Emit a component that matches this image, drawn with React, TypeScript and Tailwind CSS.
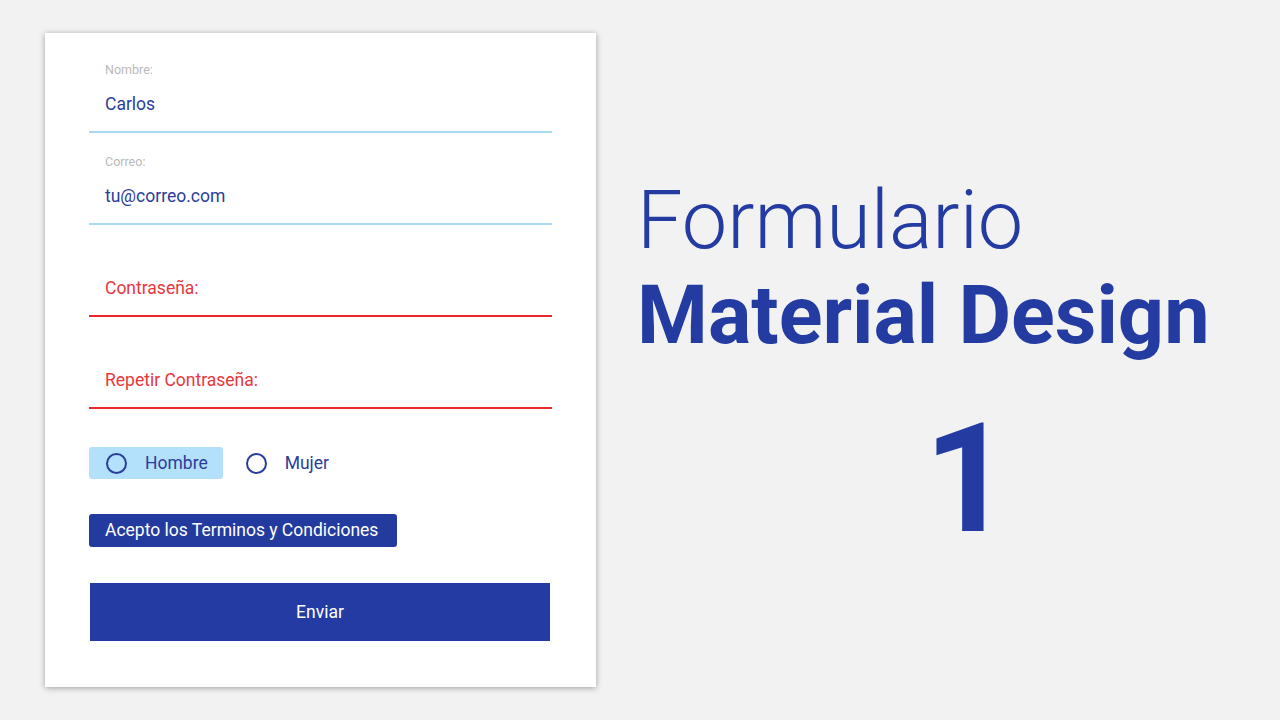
const font = { fontFamily: "Roboto, 'Liberation Sans', sans-serif" };

function Field({
  label,
  value,
  error = false,
}: {
  label?: string;
  value: string;
  error?: boolean;
}) {
  return (
    <div
      className={`pt-[21px] pb-[15px] border-b-2 ${
        error ? "border-[#e8282d]" : "border-[#a9d8f2]"
      }`}
    >
      <div className="h-4 pl-4 text-[12.5px] leading-4 text-[#b9b9b9]">
        {label}
      </div>
      <div
        className={`mt-[14px] h-6 pl-4 text-[17.5px] leading-6 ${
          error ? "text-[#e8373c]" : "text-[#2b3d9b]"
        }`}
      >
        {value}
      </div>
    </div>
  );
}

function Radio({ label, active = false }: { label: string; active?: boolean }) {
  return (
    <div
      className={`flex h-8 items-center rounded-[3px] pl-[17px] pr-[15px] ${
        active ? "bg-[#b3e0fb]" : ""
      }`}
    >
      <span className="h-[21px] w-[21px] rounded-full border-2 border-[#2b3d9b]" />
      <span className="ml-[18px] text-[17.5px] text-[#2b3d9b]">{label}</span>
    </div>
  );
}

export default function App() {
  return (
    <div
      className="flex min-h-[720px] w-full bg-[#f2f2f2] pt-[33px]"
      style={font}
    >
      <div className="ml-[45px] h-[654px] w-[551px] bg-white px-[44px] pt-2 shadow-[0_1px_6px_rgba(0,0,0,0.35)]">
        <Field label="Nombre:" value="Carlos" />
        <Field label="Correo:" value="tu@correo.com" />
        <Field value="Contraseña:" error />
        <Field value="Repetir Contraseña:" error />

        <div className="mt-[38px] flex gap-[6px]">
          <Radio label="Hombre" active />
          <Radio label="Mujer" />
        </div>

        <button className="mt-[35px] block h-[33px] w-[308px] rounded-[3px] bg-[#233b9f] px-4 text-left text-[17.5px] text-white">
          Acepto los Terminos y Condiciones
        </button>

        <button className="mx-px mt-9 block h-[58px] w-[460px] bg-[#233ba3] text-[17.5px] text-white">
          Enviar
        </button>
      </div>

      <div className="ml-[41px] mt-[140px] text-[#243ba2]">
        <div className="text-[81px] font-light leading-[95px]">Formulario</div>
        <div className="text-[81px] font-bold leading-[95px]">
          Material Design
        </div>
        <div className="ml-[287px] mt-[40px] text-[152px] font-bold leading-none">
          1
        </div>
      </div>
    </div>
  );
}
